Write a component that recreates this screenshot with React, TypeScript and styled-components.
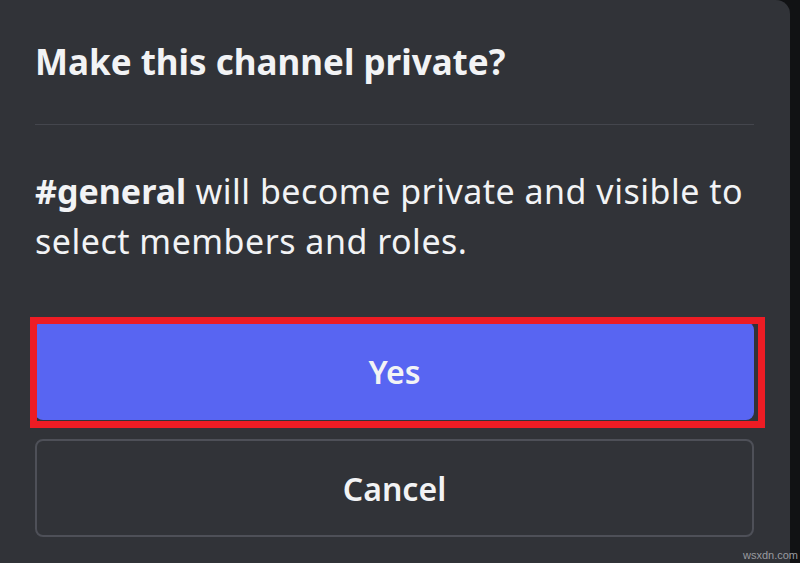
import React from "react";
import styled, { createGlobalStyle } from "styled-components";

const GlobalStyle = createGlobalStyle`
    html, body {
        margin: 0;
        padding: 0;
        background: #111214;
        overflow: hidden;
    }
    * {
        box-sizing: border-box;
    }
`;

const Screen = styled.div`
    width: 800px;
    height: 563px;
    display: flex;
    font-family: "Noto Sans", "Open Sans", sans-serif;
`;

const Dialog = styled.div`
    position: relative;
    width: 790px;
    height: 100%;
    background: #313338;
    border-top-right-radius: 14px;
    padding: 39px 36px 0 35px;
    display: flex;
    flex-direction: column;
`;

const Title = styled.h1`
    margin: 0;
    font-size: 35px;
    line-height: 46px;
    font-weight: 700;
    color: #f2f3f5;
`;

const Divider = styled.div`
    margin-top: 39px;
    height: 1px;
    background: #44464d;
`;

const Body = styled.p`
    margin: 41px 0 0 0;
    font-size: 34px;
    line-height: 50px;
    letter-spacing: 0.5px;
    font-weight: 400;
    color: #f2f3f5;

    & > strong {
        font-weight: 700;
        letter-spacing: 0;
    }
`;

const Actions = styled.div`
    margin-top: 56px;
    display: flex;
    flex-direction: column;
    gap: 19px;
`;

const Button = styled.button<{ $variant: "primary" | "outline" }>`
    height: 98px;
    width: 100%;
    border-radius: 8px;
    font-family: inherit;
    font-size: 32px;
    font-weight: 600;
    color: #f2f3f5;
    cursor: pointer;
    display: flex;
    justify-content: center;
    align-items: center;
    background: ${(p) => (p.$variant === "primary" ? "#5865f2" : "transparent")};
    border: ${(p) => (p.$variant === "primary" ? "none" : "2px solid #4e5058")};
`;

// red annotation box drawn over the Yes button
const Highlight = styled.div`
    position: absolute;
    left: 30px;
    top: 317px;
    width: 735px;
    height: 111px;
    border: 7px solid #ed1c24;
    pointer-events: none;
`;

const Watermark = styled.span`
    position: absolute;
    right: 2px;
    bottom: 2px;
    font-size: 11px;
    color: #9a9ba0;
    font-family: "Liberation Sans", sans-serif;
`;

export default function App() {
    return (
        <>
            <GlobalStyle />
            <Screen>
                <Dialog>
                    <Title>Make this channel private?</Title>
                    <Divider />
                    <Body>
                        <strong>#general</strong> will become private and visible to select members and roles.
                    </Body>
                    <Actions>
                        <Button $variant="primary">Yes</Button>
                        <Button $variant="outline">Cancel</Button>
                    </Actions>
                    <Highlight />
                </Dialog>
                <Watermark>wsxdn.com</Watermark>
            </Screen>
        </>
    );
}
